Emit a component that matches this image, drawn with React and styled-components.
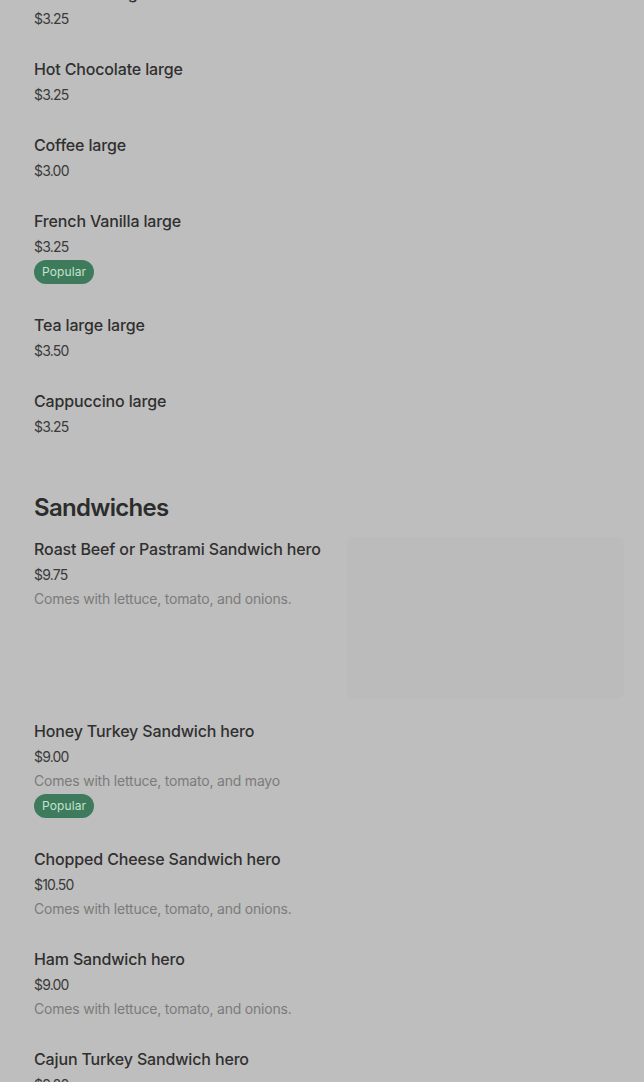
import React from "react";
import styled, { createGlobalStyle } from "styled-components";

const Global = createGlobalStyle`
  html, body { margin: 0; padding: 0; background: #bebebe; }
  body { font-family: Inter, "Noto Sans", "Liberation Sans", sans-serif; overflow: hidden; }
`;

const Page = styled.main`
  background: #bebebe;
  min-height: 1082px;
  padding: 0 20px 0 34px;
  margin-top: -19px;
`;

const Section = styled.section`
  display: flex;
  flex-direction: column;
  margin-top: ${(p) => (p.$first ? "0" : "27px")};
`;

const SectionTitle = styled.h2`
  margin: 0 0 13px;
  font-size: 24px;
  line-height: 32px;
  font-weight: 600;
  color: #2c2c2c;
  letter-spacing: -0.7px;
`;

const Item = styled.div`
  display: flex;
  align-items: flex-start;
  gap: 20px;
  padding-bottom: ${(p) => (p.$gap ?? 26)}px;
`;

const Info = styled.div`
  flex: 1;
  min-width: 0;
  display: flex;
  flex-direction: column;
`;

const Name = styled.div`
  font-size: 16px;
  line-height: 24px;
  font-weight: 500;
  color: #303030;
  letter-spacing: -0.15px;
  white-space: nowrap;
`;

const Price = styled.div`
  margin-top: 2px;
  font-size: 14px;
  line-height: 24px;
  font-weight: 400;
  color: #3a3a3a;
  letter-spacing: -0.8px;
`;

const Desc = styled.div`
  font-size: 14px;
  line-height: 24px;
  color: #7b7b7b;
  letter-spacing: -0.2px;
`;

const Badge = styled.span`
  align-self: flex-start;
  margin: 1px 0 3px;
  height: 24px;
  padding: 0 8px;
  border-radius: 12px;
  background: #3d7b5c;
  color: #c3e3cf;
  font-size: 12px;
  line-height: 24px;
  letter-spacing: 0.1px;
`;

const Thumb = styled.div`
  flex: 0 0 277px;
  height: 162px;
  border-radius: 6px;
  background: #bbbbbb;
`;

const drinks = [
  { name: "Hot Cider large", price: "$3.25" },
  { name: "Hot Chocolate large", price: "$3.25" },
  { name: "Coffee large", price: "$3.00" },
  { name: "French Vanilla large", price: "$3.25", popular: true },
  { name: "Tea large large", price: "$3.50" },
  { name: "Cappuccino large", price: "$3.25" },
];

const sandwiches = [
  {
    name: "Roast Beef or Pastrami Sandwich hero",
    price: "$9.75",
    desc: "Comes with lettuce, tomato, and onions.",
    image: true,
  },
  {
    name: "Honey Turkey Sandwich hero",
    price: "$9.00",
    desc: "Comes with lettuce, tomato, and mayo",
    popular: true,
  },
  {
    name: "Chopped Cheese Sandwich hero",
    price: "$10.50",
    desc: "Comes with lettuce, tomato, and onions.",
  },
  {
    name: "Ham Sandwich hero",
    price: "$9.00",
    desc: "Comes with lettuce, tomato, and onions.",
  },
  { name: "Cajun Turkey Sandwich hero", price: "$9.00" },
];

function MenuItem({ item }) {
  return (
    <Item $gap={item.image ? 20 : 26}>
      <Info>
        <Name>{item.name}</Name>
        <Price>{item.price}</Price>
        {item.desc && <Desc>{item.desc}</Desc>}
        {item.popular && <Badge>Popular</Badge>}
      </Info>
      {item.image && <Thumb />}
    </Item>
  );
}

export default function App() {
  return (
    <>
      <Global />
      <Page>
        <Section $first>
          {drinks.map((d) => (
            <MenuItem key={d.name} item={d} />
          ))}
        </Section>
        <Section>
          <SectionTitle>Sandwiches</SectionTitle>
          {sandwiches.map((d) => (
            <MenuItem key={d.name} item={d} />
          ))}
        </Section>
      </Page>
    </>
  );
}
